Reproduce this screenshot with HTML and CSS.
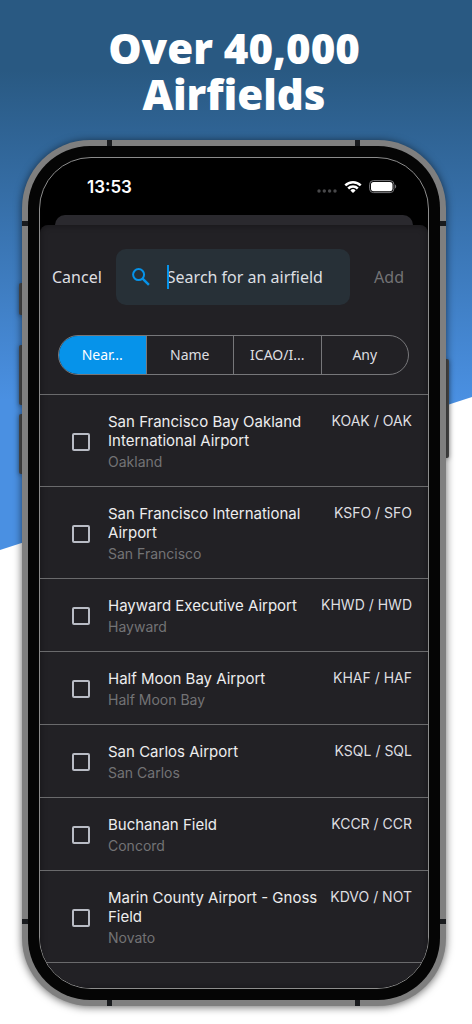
FILE: index.html
```html
<!DOCTYPE html>
<html lang="en">
<head>
<meta charset="utf-8">
<meta name="viewport" content="width=device-width, initial-scale=1">
<title>Over 40,000 Airfields</title>
<link rel="stylesheet" href="styles.css">
</head>
<body>
<main class="promo">
  <h1 class="headline">Over 40,000<br>Airfields</h1>
  <div class="phone">
    <span class="key key-mute"></span>
    <span class="key key-up"></span>
    <span class="key key-down"></span>
    <span class="key key-power"></span>
    <div class="frame">
      <span class="band band-top band-left"></span>
      <span class="band band-top band-right"></span>
      <span class="band band-bottom band-left"></span>
      <span class="band band-bottom band-right"></span>
      <span class="band-side side-left side-high"></span>
      <span class="band-side side-right side-high"></span>
      <span class="band-side side-left side-low"></span>
      <span class="band-side side-right side-low"></span>
      <div class="bezel">
        <div class="screen">
          <header class="status">
            <time class="clock">13:53</time>
            <svg class="dots" width="20" height="4" viewBox="0 0 20 4" fill="#48484a"><circle cx="2" cy="2" r="1.7"/><circle cx="7.3" cy="2" r="1.7"/><circle cx="12.6" cy="2" r="1.7"/><circle cx="18" cy="2" r="1.7"/></svg>
            <svg class="wifi" width="18" height="14" viewBox="0 0 18 14" fill="none" stroke="#fff" stroke-width="2.5"><path d="M1.3 5.3a11 11 0 0 1 15.4 0"/><path d="M4.2 8.5a6.8 6.8 0 0 1 9.6 0"/><path d="M9 13 6.4 10.4a3.7 3.7 0 0 1 5.2 0z" fill="#fff" stroke="none"/></svg>
            <svg class="battery" width="28" height="14" viewBox="0 0 28 14"><rect x=".6" y=".6" width="24.3" height="12" rx="3.8" fill="none" stroke="#77777a"/><rect x="2" y="2" width="21.5" height="9.2" rx="2.6" fill="#fff"/><path d="M26 4.6c1.6.7 1.6 3.3 0 4z" fill="#77777a"/></svg>
          </header>
          <div class="sheet-behind"></div>
          <section class="sheet">
            <form class="toolbar">
              <button type="button" class="action">Cancel</button>
              <div class="search">
                <svg class="glass" width="18" height="18" viewBox="0 0 18 18" fill="none" stroke="#0693ea" stroke-width="2"><circle cx="6.6" cy="6.6" r="5.5"/><path d="m10.6 10.6 6.3 6.3" stroke-width="2.4"/></svg>
                <input class="field" type="text" placeholder="Search for an airfield" aria-label="Search for an airfield">
                <span class="caret"></span>
              </div>
              <button type="button" class="action add" disabled>Add</button>
            </form>
            <div class="segments">
              <button type="button" class="segment selected" aria-pressed="true">Near...</button>
              <button type="button" class="segment">Name</button>
              <button type="button" class="segment">ICAO/I...</button>
              <button type="button" class="segment">Any</button>
            </div>
            <ul class="list">
              <li><label class="row"><input type="checkbox" class="tick"><span class="place"><span class="name">San Francisco Bay Oakland International Airport</span><span class="city">Oakland</span></span><span class="code">KOAK / OAK</span></label></li>
              <li><label class="row"><input type="checkbox" class="tick"><span class="place"><span class="name">San Francisco International Airport</span><span class="city">San Francisco</span></span><span class="code">KSFO / SFO</span></label></li>
              <li><label class="row"><input type="checkbox" class="tick"><span class="place"><span class="name">Hayward Executive Airport</span><span class="city">Hayward</span></span><span class="code">KHWD / HWD</span></label></li>
              <li><label class="row"><input type="checkbox" class="tick"><span class="place"><span class="name">Half Moon Bay Airport</span><span class="city">Half Moon Bay</span></span><span class="code">KHAF / HAF</span></label></li>
              <li><label class="row"><input type="checkbox" class="tick"><span class="place"><span class="name">San Carlos Airport</span><span class="city">San Carlos</span></span><span class="code">KSQL / SQL</span></label></li>
              <li><label class="row"><input type="checkbox" class="tick"><span class="place"><span class="name">Buchanan Field</span><span class="city">Concord</span></span><span class="code">KCCR / CCR</span></label></li>
              <li><label class="row"><input type="checkbox" class="tick"><span class="place"><span class="name">Marin County Airport - Gnoss Field</span><span class="city">Novato</span></span><span class="code">KDVO / NOT</span></label></li>
            </ul>
          </section>
        </div>
      </div>
    </div>
  </div>
</main>
</body>
</html>
```
FILE: styles.css
```css
* { box-sizing: border-box; }

body {
  margin: 0;
  background: #fff;
  font-family: Inter, "Liberation Sans", sans-serif;
}

button, input { font: inherit; color: inherit; }

.promo {
  position: relative;
  padding: 25px 26px 18px 22px;
}

.promo::before {
  content: "";
  position: absolute;
  inset: 0 0 auto;
  height: 550px;
  background: linear-gradient(#295982 0, #295982 70px, #4a90e2 400px);
  clip-path: polygon(0 0, 100% 0, 100% 397px, 0 100%);
}

.headline {
  position: relative;
  margin: 0 0 23px;
  color: #fff;
  font: 800 42px/46px "Open Sans", "Noto Sans", sans-serif;
  text-align: center;
}

.phone { position: relative; }

.key {
  position: absolute;
  left: -3px;
  width: 5px;
  background: #4c4c4c;
  border-radius: 2px;
  box-shadow: 0 1px 5px rgba(0, 0, 0, .4);
}
.key-mute { top: 143px; height: 32px; }
.key-up { top: 205px; height: 60px; }
.key-down { top: 274px; height: 60px; }
.key-power { left: auto; right: -3px; top: 219px; height: 99px; }

.frame {
  position: relative;
  padding: 6px;
  background: #7f7f7f;
  border-radius: 68px;
  box-shadow: 0 1px 9px rgba(0, 0, 0, .6);
}

.band, .band-side { position: absolute; background: #191b1e; }
.band { width: 5px; height: 6px; }
.band-top { top: 0; }
.band-bottom { bottom: 0; }
.band-left { left: 85px; }
.band-right { right: 86px; }
.band-side { width: 6px; height: 5px; }
.side-left { left: 0; }
.side-right { right: 0; }
.side-high { top: 81px; }
.side-low { bottom: 82px; }

.bezel {
  padding: 11px;
  background: #050505;
  border-radius: 62px;
}

.screen {
  position: relative;
  overflow: hidden;
  background: #000;
  border: 1px solid #8c8c8c;
  border-radius: 52px;
}

.status {
  display: flex;
  align-items: center;
  height: 57px;
  padding: 0 31px 0 47px;
  color: #fff;
}
.clock {
  flex: 1;
  font-size: 17px;
  font-weight: 600;
  line-height: 20px;
}
.dots { margin: 8px 7px 0 0; }
.wifi { margin-right: 7px; }

.sheet-behind {
  height: 10px;
  margin: 0 15px;
  background: #2a292e;
  border-radius: 10px 10px 0 0;
}

.sheet {
  padding: 24px 0 25px;
  background: #222125;
  border-radius: 8px 8px 0 0;
  box-shadow: inset 0 0 7px rgba(0, 0, 0, .4);
}

.toolbar {
  display: flex;
  align-items: center;
  gap: 14px;
  padding: 0 24px 0 12px;
  color: #dedee0;
  font: 16px/24px "Noto Sans", sans-serif;
}
.action {
  padding: 0;
  background: none;
  border: 0;
}
.add { margin-left: 10px; color: #737375; }

.search {
  position: relative;
  display: flex;
  flex: 1;
  align-items: center;
  gap: 17px;
  height: 56px;
  min-width: 0;
  padding: 0 16px;
  background: #273037;
  border-radius: 10px;
}
.glass { flex: none; }
.field {
  flex: 1;
  min-width: 0;
  padding: 0;
  background: none;
  border: 0;
  outline: 0;
}
.field::placeholder { color: #dcdfe2; opacity: 1; }
.caret {
  position: absolute;
  left: 51px;
  top: 16px;
  width: 2px;
  height: 24px;
  background: #0693ea;
}

.segments {
  display: flex;
  margin: 30px 19px 19px 18px;
  overflow: hidden;
  border: 1px solid #77777a;
  border-radius: 20px;
}
.segment {
  flex: 1 1 0;
  height: 38px;
  padding: 0;
  background: none;
  border: 0;
  color: #dedee0;
  font: 14px/20px "Noto Sans", sans-serif;
}
.segment + .segment { border-left: 1px solid #77777a; }
.selected { background: #0693ea; color: #fff; }

.list {
  margin: 0;
  padding: 0;
  list-style: none;
  border-bottom: 1px solid #6a6a6c;
}
.row {
  display: flex;
  align-items: center;
  padding: 17px 16px 15px 32px;
  border-top: 1px solid #6a6a6c;
}
.tick {
  appearance: none;
  flex: none;
  width: 18px;
  height: 18px;
  margin: 0 18px 0 0;
  border: 2px solid #b9bcc5;
  border-radius: 2px;
}
.place { flex: 1; min-width: 0; }
.name, .city { display: block; line-height: 19px; }
.name { color: #ededee; font-size: 15px; }
.city { margin-top: 2px; color: #737375; font-size: 14px; }
.code {
  align-self: flex-start;
  color: #dedee0;
  font-size: 14px;
  line-height: 17px;
  white-space: nowrap;
}
```
